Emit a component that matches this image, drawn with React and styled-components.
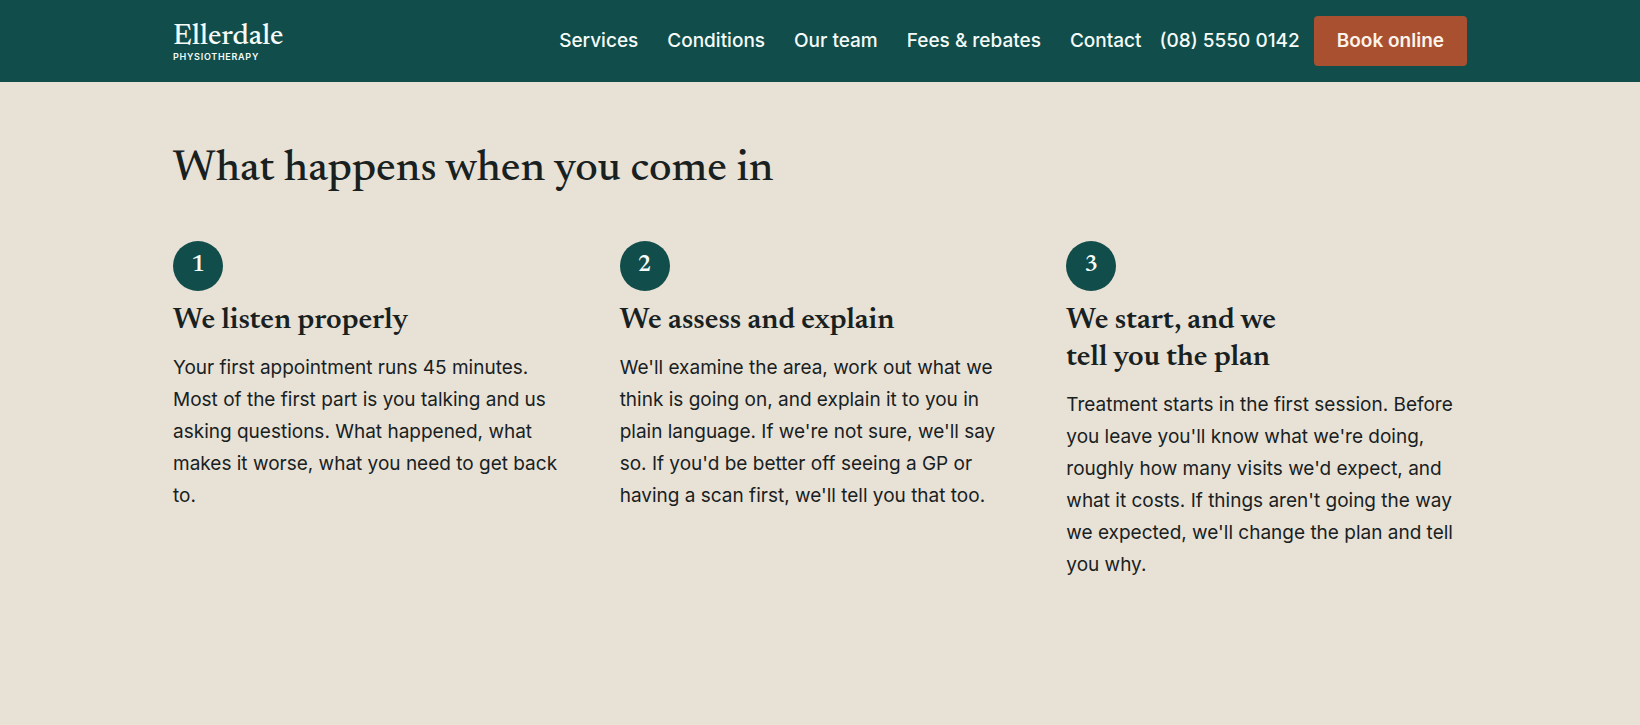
import React from "react";
import styled, { createGlobalStyle, ThemeProvider } from "styled-components";

const theme = {
  teal: "#114d4a",
  sand: "#e8e1d6",
  clay: "#a85030",
  ink: "#18211f",
  white: "#f5fbf9",
  serif: '"Newsreader", "Liberation Serif", serif',
  sans: '"Inter", "Liberation Sans", sans-serif',
};

const GlobalStyle = createGlobalStyle`
  *, *::before, *::after { box-sizing: border-box; }
  body {
    margin: 0;
    background: ${theme.sand};
    color: ${theme.ink};
    font-family: ${theme.sans};
    font-size: 19px;
    line-height: 32px;
  }
`;

const Container = styled.div`
  width: 100%;
  max-width: 1342px;
  margin: 0 auto;
  padding: 0 24px;
`;

const Header = styled.header`
  background: ${({ theme }) => theme.teal};
  color: ${({ theme }) => theme.white};
`;

const HeaderBar = styled(Container)`
  display: flex;
  align-items: center;
  justify-content: space-between;
  padding-top: 16px;
  padding-bottom: 16px;
`;

const Brand = styled.a`
  display: flex;
  flex-direction: column;
  color: inherit;
  text-decoration: none;
`;

const BrandName = styled.span`
  font-family: ${({ theme }) => theme.serif};
  font-size: 30px;
  font-weight: 500;
  line-height: 32px;
`;

const BrandLine = styled.span`
  font-size: 9px;
  font-weight: 600;
  line-height: 8px;
  letter-spacing: 0.08em;
  text-transform: uppercase;
`;

const HeaderEnd = styled.div`
  display: flex;
  align-items: center;
  gap: 14px;
`;

const Nav = styled.nav`
  display: flex;
  gap: 29px;
  margin-right: 4px;
`;

const HeaderLink = styled.a`
  color: inherit;
  font-weight: 500;
  text-decoration: none;
  white-space: nowrap;
`;

const BookButton = styled.button`
  height: 50px;
  padding: 0 23px;
  border: 0;
  border-radius: 4px;
  background: ${({ theme }) => theme.clay};
  color: #fbf3ea;
  font: 600 19px/24px ${({ theme }) => theme.sans};
  white-space: nowrap;
  cursor: pointer;
`;

const Visit = styled.section`
  padding: 60px 0 96px;
`;

const Title = styled.h1`
  margin: 0 0 43px;
  font-family: ${({ theme }) => theme.serif};
  font-size: 44px;
  font-weight: 500;
  line-height: 56px;
`;

const Steps = styled.ol`
  display: grid;
  grid-template-columns: repeat(3, minmax(0, 1fr));
  gap: 46px;
  margin: 0;
  padding: 0;
  list-style: none;
`;

const Step = styled.li`
  display: flex;
  flex-direction: column;
  align-items: flex-start;
`;

const StepNumber = styled.span`
  display: flex;
  justify-content: center;
  width: 50px;
  height: 50px;
  border-radius: 50%;
  background: ${({ theme }) => theme.teal};
  color: ${({ theme }) => theme.white};
  font-family: ${({ theme }) => theme.serif};
  font-size: 23px;
  font-weight: 600;
  line-height: 50px;
`;

const StepTitle = styled.h2`
  margin: 12px 0;
  font-family: ${({ theme }) => theme.serif};
  font-size: 30px;
  font-weight: 600;
  line-height: 37px;
  text-wrap: balance;
`;

const StepText = styled.p`
  margin: 0;
`;

const links = ["Services", "Conditions", "Our team", "Fees & rebates", "Contact"];

const steps = [
  {
    title: "We listen properly",
    text: "Your first appointment runs 45 minutes. Most of the first part is you talking and us asking questions. What happened, what makes it worse, what you need to get back to.",
  },
  {
    title: "We assess and explain",
    text: "We'll examine the area, work out what we think is going on, and explain it to you in plain language. If we're not sure, we'll say so. If you'd be better off seeing a GP or having a scan first, we'll tell you that too.",
  },
  {
    title: "We start, and we tell you the plan",
    text: "Treatment starts in the first session. Before you leave you'll know what we're doing, roughly how many visits we'd expect, and what it costs. If things aren't going the way we expected, we'll change the plan and tell you why.",
  },
];

export default function App() {
  return (
    <ThemeProvider theme={theme}>
      <GlobalStyle />
      <Header>
        <HeaderBar>
          <Brand href="#">
            <BrandName>Ellerdale</BrandName>
            <BrandLine>Physiotherapy</BrandLine>
          </Brand>
          <HeaderEnd>
            <Nav>
              {links.map((label) => (
                <HeaderLink key={label} href="#">{label}</HeaderLink>
              ))}
            </Nav>
            <HeaderLink href="tel:0855500142">(08) 5550 0142</HeaderLink>
            <BookButton type="button">Book online</BookButton>
          </HeaderEnd>
        </HeaderBar>
      </Header>
      <main>
        <Visit>
          <Container>
            <Title>What happens when you come in</Title>
            <Steps>
              {steps.map((step, index) => (
                <Step key={step.title}>
                  <StepNumber>{index + 1}</StepNumber>
                  <StepTitle>{step.title}</StepTitle>
                  <StepText>{step.text}</StepText>
                </Step>
              ))}
            </Steps>
          </Container>
        </Visit>
      </main>
    </ThemeProvider>
  );
}
